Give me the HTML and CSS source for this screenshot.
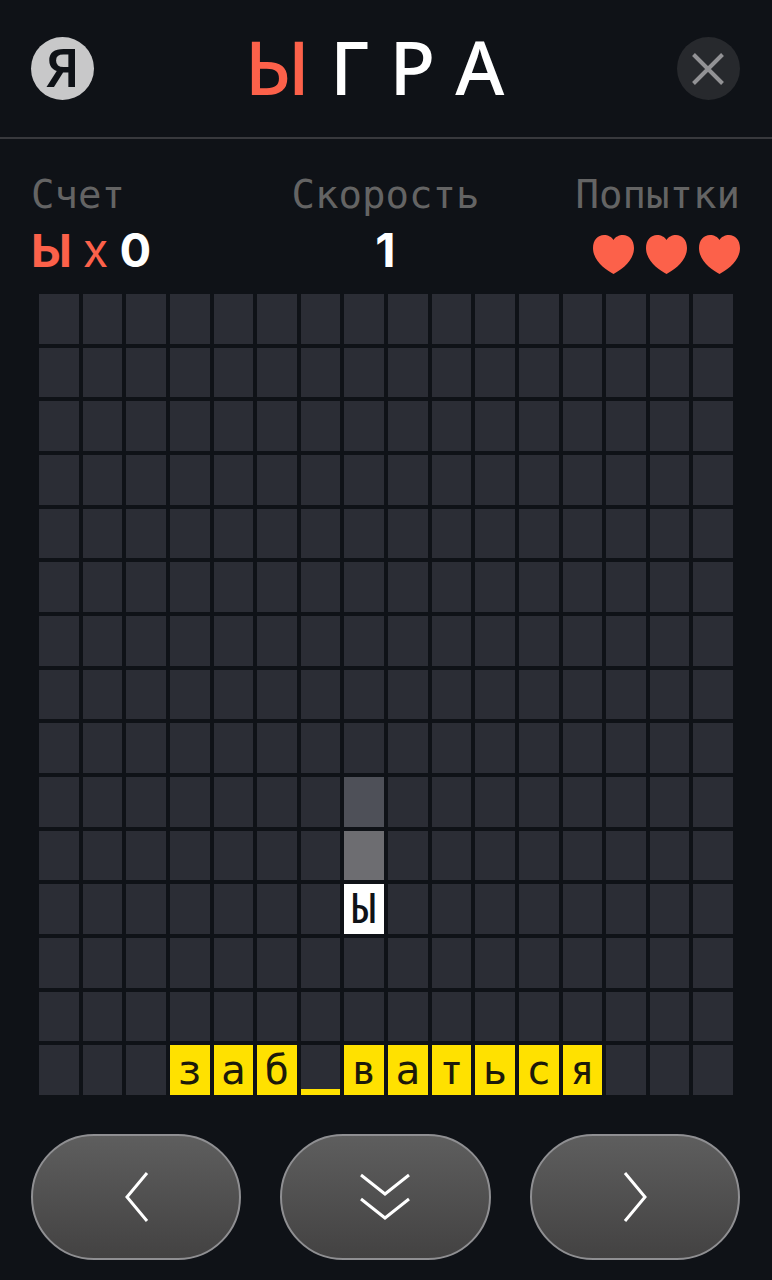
FILE: index.html
```html
<!DOCTYPE html>
<html lang="ru">
  <head>
    <meta charset="utf-8" />
    <meta name="viewport" content="width=device-width, initial-scale=1.0" />
    <title>Ыгра</title>
    <link rel="stylesheet" href="styles.css">
  </head>

  <body>
    <header class="top">
      <a href="#" class="round logo" aria-label="Яндекс">Я</a>
      <h1 class="title"><span class="accent">Ы</span><span>Г</span><span>Р</span><span>А</span></h1>
      <button class="round close" aria-label="Закрыть">
        <svg class="icon-close" viewBox="0 0 32 32">
          <path d="M1.500 1.500L30.500 30.500M30.500 1.500L1.500 30.500" />
        </svg>
      </button>
    </header>

    <section class="stats">
      <div class="stat">
        <h2 class="label">Счет</h2>
        <p class="value"><b class="accent score-letter">Ы</b><span class="accent times">x</span><b>0</b></p>
      </div>
      <div class="stat center">
        <h2 class="label">Скорость</h2>
        <p class="value"><b>1</b></p>
      </div>
      <div class="stat right">
        <h2 class="label">Попытки</h2>
        <p class="value hearts">
          <svg class="heart" viewBox="0 0 41 39"><path d="M20.500 39C13 35 0 26 0 13C0 5 5 0 11 0C15 0 19 2 20.500 5C22 2 26 0 30 0C36 0 41 5 41 13C41 26 28 35 20.500 39Z" /></svg>
          <svg class="heart" viewBox="0 0 41 39"><path d="M20.500 39C13 35 0 26 0 13C0 5 5 0 11 0C15 0 19 2 20.500 5C22 2 26 0 30 0C36 0 41 5 41 13C41 26 28 35 20.500 39Z" /></svg>
          <svg class="heart" viewBox="0 0 41 39"><path d="M20.500 39C13 35 0 26 0 13C0 5 5 0 11 0C15 0 19 2 20.500 5C22 2 26 0 30 0C36 0 41 5 41 13C41 26 28 35 20.500 39Z" /></svg>
        </p>
      </div>
    </section>

    <main id="board" class="board"></main>

    <nav class="controls">
      <button class="control" aria-label="Влево">
        <svg class="icon" viewBox="0 0 50 50"><path d="M36 1L16 25L36 49" /></svg>
      </button>
      <button class="control" aria-label="Вниз">
        <svg class="icon" viewBox="0 0 50 50"><path d="M1 3L25 22L49 3M1 27L25 46L49 27" /></svg>
      </button>
      <button class="control" aria-label="Вправо">
        <svg class="icon" viewBox="0 0 50 50"><path d="M15 1L35 25L15 49" /></svg>
      </button>
    </nav>

    <script>
      const COLS = 16;
      const ROWS = 15;
      const word = "заб_ваться";
      const wordStart = 3;
      const falling = { col: 7, row: 11 };

      const board = document.querySelector("#board");

      // все клетки поля, сверху вниз
      for (let row = 0; row < ROWS; row++) {
        for (let col = 0; col < COLS; col++) {
          const cell = document.createElement("div");
          cell.className = "cell";

          if (col === falling.col) {
            if (row === falling.row) {
              cell.classList.add("falling");
              cell.textContent = "Ы";
            }
            if (row === falling.row - 1) cell.classList.add("trail-near");
            if (row === falling.row - 2) cell.classList.add("trail-far");
          }

          // слово лежит в последнем ряду
          const letter = word[col - wordStart];
          if (row === ROWS - 1 && letter) {
            if (letter === "_") {
              cell.classList.add("blank");
            } else {
              cell.classList.add("letter");
              cell.textContent = letter;
            }
          }

          board.appendChild(cell);
        }
      }
    </script>
  </body>
</html>
```
FILE: styles.css
```css
* {
  box-sizing: border-box;
}

body {
  display: flex;
  flex-direction: column;
  height: 100vh;
  margin: 0;
  background-color: #0f1217;
  color: white;
  font-family: Inter, sans-serif;
}

h1,
h2,
p {
  margin: 0;
}

button {
  padding: 0;
  cursor: pointer;
}

.accent {
  color: #fc614a;
}

.top {
  display: flex;
  justify-content: space-between;
  align-items: center;
  height: 139px;
  padding: 0 32px 0 31px;
  border-bottom: 2px solid #38393d;
}

.round {
  display: flex;
  justify-content: center;
  align-items: center;
  width: 63px;
  height: 63px;
  border: none;
  border-radius: 50%;
}

.logo {
  background-color: #c8c8c9;
  color: #0f1217;
  font-family: "Noto Sans", sans-serif;
  font-size: 52px;
  font-weight: 600;
  line-height: 60px;
  padding-bottom: 3px;
  text-decoration: none;
}

.close {
  background-color: #27292d;
}

.icon-close {
  width: 32px;
  fill: none;
  stroke: #929295;
  stroke-width: 4;
}

.title {
  display: flex;
  gap: 20px;
  padding: 0 22px 6px 0;
  font-family: "Noto Sans", sans-serif;
  font-size: 75px;
  font-weight: 500;
  line-height: 80px;
}

.stats {
  display: grid;
  grid-template-columns: 1fr 1fr 1fr;
  padding: 33px 32px 0 31px;
}

.center {
  text-align: center;
}

.right {
  text-align: right;
}

.label {
  color: #646464;
  font-family: "DejaVu Sans Mono", monospace;
  font-size: 39px;
  font-weight: normal;
  line-height: 46px;
}

.value {
  height: 60px;
  padding-top: 4px;
  font-size: 47px;
  line-height: 56px;
}

.score-letter {
  font-family: Roboto, sans-serif;
}

.times {
  margin: 0 11px;
}

.hearts {
  display: flex;
  justify-content: flex-end;
  gap: 12px;
  padding-top: 17px;
}

.heart {
  width: 41px;
  height: 39px;
  fill: #fc614a;
}

.board {
  display: grid;
  flex: 1;
  grid-template-columns: repeat(16, 1fr);
  grid-template-rows: repeat(15, minmax(0, 1fr));
  gap: 4px;
  min-height: 0;
  margin: 16px 39px 39px;
}

.cell {
  background-color: #2b2d35;
  font-family: "DejaVu Sans Mono", monospace;
  font-size: 41px;
  line-height: 51px;
  text-align: center;
}

.trail-far {
  background-color: #4e5058;
}

.trail-near {
  background-color: #6d6d71;
}

.falling {
  background-color: white;
  color: #0f1217;
}

.letter {
  background-color: #ffe100;
  color: #1c1a0a;
}

.blank {
  border-bottom: 6px solid #ffe100;
}

.controls {
  display: grid;
  grid-template-columns: 1fr 1fr 1fr;
  gap: 39px;
  padding: 0 32px 20px 31px;
}

.control {
  display: flex;
  justify-content: center;
  align-items: center;
  height: 126px;
  border: 2px solid #8f8f92;
  border-radius: 63px;
  background: linear-gradient(#5e5e5e, #434242);
}

.icon {
  width: 50px;
  fill: none;
  stroke: white;
  stroke-width: 3;
}
```
